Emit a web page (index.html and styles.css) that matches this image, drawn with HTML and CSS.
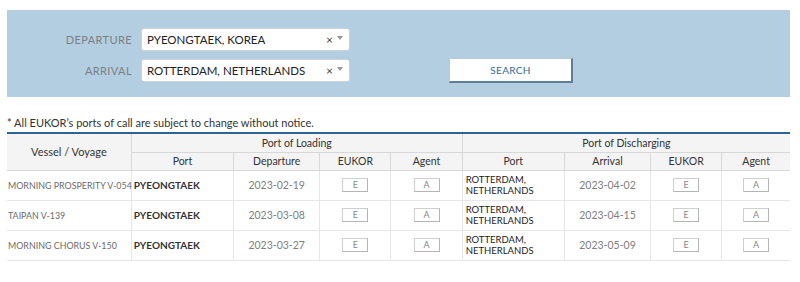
FILE: index.html
```html
<!DOCTYPE html>
<html>
<head>
<meta charset="utf-8">
<link rel="stylesheet" href="styles.css">
</head>
<body>
<div class="page">
  <div class="panel">
    <div class="form">
      <label class="lbl">DEPARTURE</label>
      <div class="select"><span class="val">PYEONGTAEK, KOREA</span><span class="clr">×</span><span class="caret"></span></div>
      <div class="spacer"></div>
      <label class="lbl">ARRIVAL</label>
      <div class="select"><span class="val">ROTTERDAM, NETHERLANDS</span><span class="clr">×</span><span class="caret"></span></div>
      <button class="search">SEARCH</button>
    </div>
  </div>
  <p class="note">* All EUKOR’s ports of call are subject to change without notice.</p>
  <table class="sched">
    <colgroup>
      <col class="c-vessel"><col class="c-port"><col class="c-date"><col class="c-btn"><col class="c-btn">
      <col class="c-port"><col class="c-date"><col class="c-btn"><col class="c-btn2">
    </colgroup>
    <thead>
      <tr class="h1">
        <th rowspan="2" class="vv">Vessel / Voyage</th>
        <th colspan="4">Port of Loading</th>
        <th colspan="4">Port of Discharging</th>
      </tr>
      <tr class="h2">
        <th>Port</th><th>Departure</th><th>EUKOR</th><th>Agent</th>
        <th>Port</th><th>Arrival</th><th>EUKOR</th><th>Agent</th>
      </tr>
    </thead>
    <tbody>
      <tr>
        <td class="vessel">MORNING PROSPERITY V-054</td>
        <td class="port">PYEONGTAEK</td>
        <td class="date">2023-02-19</td>
        <td><span class="mini">E</span></td>
        <td><span class="mini">A</span></td>
        <td class="port2">ROTTERDAM,<br>NETHERLANDS</td>
        <td class="date">2023-04-02</td>
        <td><span class="mini">E</span></td>
        <td><span class="mini">A</span></td>
      </tr>
      <tr>
        <td class="vessel">TAIPAN V-139</td>
        <td class="port">PYEONGTAEK</td>
        <td class="date">2023-03-08</td>
        <td><span class="mini">E</span></td>
        <td><span class="mini">A</span></td>
        <td class="port2">ROTTERDAM,<br>NETHERLANDS</td>
        <td class="date">2023-04-15</td>
        <td><span class="mini">E</span></td>
        <td><span class="mini">A</span></td>
      </tr>
      <tr>
        <td class="vessel">MORNING CHORUS V-150</td>
        <td class="port">PYEONGTAEK</td>
        <td class="date">2023-03-27</td>
        <td><span class="mini">E</span></td>
        <td><span class="mini">A</span></td>
        <td class="port2">ROTTERDAM,<br>NETHERLANDS</td>
        <td class="date">2023-05-09</td>
        <td><span class="mini">E</span></td>
        <td><span class="mini">A</span></td>
      </tr>
    </tbody>
  </table>
</div>
</body>
</html>
```

FILE: styles.css
```css
* { box-sizing: border-box; }
html, body { margin: 0; padding: 0; background: #fff; }
body { font-family: Lato, "Open Sans", "Liberation Sans", sans-serif; color: #333; }

.page { padding: 10px 10px 0 7px; width: 800px; }

.panel {
  background: #b4cee1;
  height: 87px;
  padding-top: 18px;
}
.form {
  display: grid;
  grid-template-columns: 125px 209px 124px;
  grid-template-rows: 23px 23px;
  column-gap: 9px;
  row-gap: 8px;
  align-items: center;
}
.form .search { margin-left: 90px; }
.lbl {
  text-align: right;
  font-size: 11px;
  letter-spacing: 0.4px;
  color: #7a7f85;
}
.select {
  height: 23px;
  background: #fff;
  border: 1px solid #c9d3db;
  border-radius: 3px;
  display: flex;
  align-items: center;
  padding: 0 6px 0 5px;
  font-size: 11.5px;
  color: #222;
}
.select .val { flex: 1; }
.select .clr { font-size: 12px; color: #444; margin-right: 4px; line-height: 1; }
.select .caret {
  width: 0; height: 0;
  border-left: 3px solid transparent;
  border-right: 3px solid transparent;
  border-top: 4px solid #999;
  margin-top: -3px;
}
.search {
  width: 124px;
  height: 25px;
  margin-top: 0;
  background: #fff;
  border: 1px solid #b9c9d6;
  border-right: 2px solid #5f7f99;
  border-bottom: 2px solid #5f7f99;
  font-family: inherit;
  font-size: 10px;
  letter-spacing: 0.3px;
  color: #2f6b97;
  padding: 0;
}

.note {
  margin: 19px 0 0 0;
  font-size: 11px;
  line-height: 14px;
  color: #333;
  height: 16px;
}

.sched {
  width: 783px;
  border-collapse: collapse;
  table-layout: fixed;
  border-top: 2px solid #2f6394;
  font-size: 10.5px;
}
.c-vessel { width: 124px; }
.c-port { width: 102px; }
.c-date { width: 86px; }
.c-btn { width: 71px; }
.c-btn2 { width: 68px; }

.sched th {
  background: #f4f4f4;
  font-weight: normal;
  color: #333;
  font-size: 10.5px;
  border: 1px solid #d8d8d8;
  border-top: 0;
  padding: 0;
  text-align: center;
}
.sched th:first-child { border-left: 0; }
.sched tr.h1 th { height: 19px; }
.sched tr.h1 th:last-child { border-right: 0; }
.sched tr.h2 th { height: 18px; }
.sched tr.h2 th:last-child { border-right: 0; }
.sched th.vv { font-size: 11px; }

.sched td {
  height: 30px;
  border: 1px solid #e6e6e6;
  border-top: 0;
  padding: 0;
  text-align: center;
  vertical-align: middle;
}
.sched td:first-child { border-left: 0; }
.sched td:last-child { border-right: 0; }
.sched td.vessel { text-align: left; color: #6b6b6b; padding-left: 1px; font-size: 8.9px; white-space: nowrap; }
.sched td.port { text-align: left; font-weight: bold; padding-left: 2px; font-size: 10px; color: #333; }
.sched td.port2 { text-align: left; padding-left: 3px; font-size: 9.5px; line-height: 11px; color: #222; }
.sched td.date { color: #808080; font-size: 10.5px; }
.mini {
  display: inline-block;
  width: 26px;
  height: 14px;
  line-height: 12px;
  border: 1px solid #cfcfcf;
  border-right-color: #b5b5b5;
  border-bottom-color: #b5b5b5;
  font-size: 9px;
  color: #888;
  background: #fff;
  vertical-align: middle;
}
```
